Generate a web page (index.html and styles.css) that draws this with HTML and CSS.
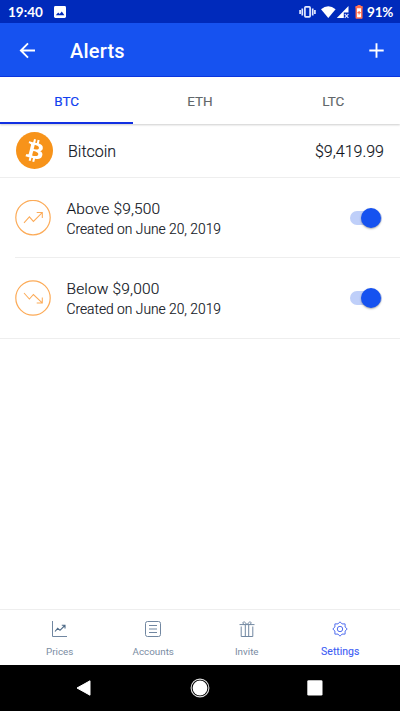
FILE: index.html
```html
<!DOCTYPE html>
<html lang="en">
<head>
<meta charset="utf-8">
<title>Alerts</title>
<link rel="stylesheet" href="styles.css">
</head>
<body>
<div class="phone">
  <div class="status">
    <span class="clock">19:40</span>
    <svg class="s-photo" width="12" height="12" viewBox="0 0 12 12"><rect width="12" height="12" rx="1.4" fill="#fff"/><path d="M1.8 9.3 4.2 6.4 5.7 8.1 7.8 5.4 10.4 9.3z" fill="#002abb"/></svg>
    <svg class="s-icons" width="66" height="16" viewBox="0 0 66 16">
      <g fill="none" stroke="#e4eaff" stroke-width="1.7"><rect x="5.9" y="2.900" width="5.200" height="10" rx=".8"/><path d="M3.300 4.500v7M13.700 4.500v7M1.100 6v4M15.900 6v4"/></g>
      <path d="M22 5.200Q29.300-.5 36.600 5.200L29.300 14z" fill="#fff"/>
      <path d="M49.500 2v6.600h-4.700V14H37.800z" fill="#fff"/>
      <path d="M45.800 10l3.600 3.800M49.400 10l-3.600 3.800" stroke="#dce3ff" stroke-width="1.100"/>
      <path d="M57.300 2.800h5.500V14h-5.500z" fill="#fff" stroke="#ff7051" stroke-width="1.500" stroke-linejoin="round"/>
      <path d="M58.500 1h3.100v1.300h1.900v1.900h-6.900V2.300h1.900z" fill="#ff7051"/>
      <path d="M58.400 8.700h3.400M60.100 7v3.400" stroke="#ff7051" stroke-width="1.200"/>
    </svg>
    <span class="percent">91%</span>
  </div>
  <header class="appbar">
    <svg class="back" width="18" height="18" viewBox="0 0 18 18" fill="none" stroke="#fff" stroke-width="1.900"><path d="M17 8.500H2.900M10 1.400 2.900 8.500l7.100 7.100"/></svg>
    <h1>Alerts</h1>
    <svg class="plus" width="16" height="16" viewBox="0 0 16 16" stroke="#fff" stroke-width="1.900"><path d="M8.500 .3v14.400M1.300 7.500h14.400"/></svg>
  </header>
  <nav class="tabs">
    <a class="tab active">BTC</a><a class="tab">ETH</a><a class="tab">LTC</a>
  </nav>
  <main>
    <section class="coin">
      <svg class="logo" width="37" height="37" viewBox="0 0 32 32"><circle cx="16" cy="16" r="16" fill="#f7931a"/><path fill="#fff" d="M23.189 14.020c.314-2.096-1.283-3.223-3.465-3.975l.708-2.840-1.728-.43-.69 2.765c-.454-.114-.92-.22-1.385-.326l.695-2.783L15.596 6l-.708 2.839c-.376-.086-.746-.170-1.104-.26l.002-.009-2.384-.595-.46 1.846s1.283.294 1.256.312c.700.175.826.638.805 1.006l-.806 3.235c.048.012.110.030.180.057l-.183-.045-1.130 4.532c-.086.212-.303.531-.793.410.018.025-1.256-.313-1.256-.313l-.858 1.978 2.250.561c.418.105.828.215 1.231.318l-.715 2.872 1.727.43.708-2.840c.472.127.930.245 1.378.357l-.706 2.828 1.728.43.715-2.866c2.948.558 5.164.333 6.097-2.333.752-2.146-.037-3.385-1.588-4.192 1.130-.260 1.980-1.003 2.207-2.538zm-3.950 5.538c-.533 2.147-4.148.986-5.320.695l.950-3.805c1.172.293 4.929.872 4.370 3.110zm.535-5.569c-.487 1.953-3.495.960-4.470.717l.860-3.450c.975.243 4.118.696 3.610 2.733z"/></svg>
      <span class="coin-name">Bitcoin</span>
      <span class="price">$9,419.99</span>
    </section>
    <section class="alert">
      <svg class="badge" width="36" height="36" viewBox="0 0 36 36" fill="none" stroke="#fcab58"><circle cx="18" cy="17.600" r="17.200" stroke-width="1.200"/><path d="M9 22.900 14.400 16.900 18.400 21.400 27.200 12.600M21.700 12.400h5.600v5.500" stroke-width="1.050"/></svg>
      <div class="info"><div class="name">Above $9,500</div><div class="date">Created on June 20, 2019</div></div>
      <span class="switch"></span>
    </section>
    <section class="alert last">
      <svg class="badge" width="36" height="36" viewBox="0 0 36 36" fill="none" stroke="#fcab58"><circle cx="18" cy="18" r="17.200" stroke-width="1.200"/><path d="M9 13 14.400 19 18.400 14.500 27.200 22.800M21.700 22.900h5.600v-5.500" stroke-width="1.050"/></svg>
      <div class="info"><div class="name">Below $9,000</div><div class="date">Created on June 20, 2019</div></div>
      <span class="switch"></span>
    </section>
  </main>
  <nav class="bottom">
    <a class="item"><svg width="18" height="18" viewBox="0 0 18 18" fill="none" stroke="#7187a1" stroke-width="1"><path d="M1.500 1v15.500H16"/><path d="M4 11.500 6.700 8.300 9 10.300 13.800 5.500M10.800 5.300h3.200v3.200" stroke="#4f6b88" stroke-width="1.100"/></svg><span>Prices</span></a>
    <a class="item"><svg width="18" height="18" viewBox="0 0 18 18" fill="none" stroke="#7187a1" stroke-width="1"><rect x="1.500" y="1.500" width="15" height="15" rx="2"/><path d="M5 5.500h8M5 9h8M5 12.500h8"/></svg><span>Accounts</span></a>
    <a class="item"><svg width="18" height="18" viewBox="0 0 18 18" fill="none" stroke="#7187a1" stroke-width="1"><path d="M1.500 4.600h15M3.200 6.500v10h11.600v-10M7.300 5v11.500M10.700 5v11.500M8.500 4.300C7 1.200 4.700 1.300 5 3.200c.1.700.7 1.100 1.300 1.200M9.500 4.300c1.500-3.100 3.800-3 3.500-1.100-.1.700-.7 1.100-1.300 1.200"/></svg><span>Invite</span></a>
    <a class="item current"><svg width="18" height="18" viewBox="0 0 18 18" fill="none" stroke="#536ff0" stroke-width="1" stroke-linejoin="round"><path d="M9 1.800 11 3.900 14.100 3.900 14.100 7 16.200 9 14.100 11 14.100 14.100 11 14.100 9 16.200 7 14.100 3.900 14.100 3.900 11 1.800 9 3.900 7 3.900 3.900 7 3.900z"/><circle cx="9" cy="9" r="2.700"/></svg><span>Settings</span></a>
  </nav>
  <div class="system">
    <svg width="18" height="18" viewBox="0 0 18 18"><path d="M1 9 14 1.800v14.400z" fill="#fff" stroke="#fff" stroke-linejoin="round"/></svg>
    <svg width="20" height="20" viewBox="0 0 20 20"><circle cx="10" cy="10" r="8.900" fill="none" stroke="#ddd" stroke-width="1.100"/><circle cx="10" cy="10" r="7.400" fill="#fff"/></svg>
    <svg width="18" height="18" viewBox="0 0 18 18"><rect x="1.300" y="1.300" width="15.200" height="15.200" rx="1.300" fill="#fff"/></svg>
  </div>
</div>
</body>
</html>
```
FILE: styles.css
```css
* { box-sizing: border-box; }
body { margin: 0; background: #fff; font-family: Roboto, "Liberation Sans", sans-serif; color: #10141c; }
svg { display: block; flex: none; }
.phone { width: 400px; height: 711px; display: flex; flex-direction: column; overflow: hidden; }

.status { height: 23px; flex: none; background: #002abb; color: #fff; display: flex; align-items: center; padding: 1px 7px 0 8px; font: 700 13.5px/22px Lato, sans-serif; }
.clock { width: 46px; white-space: nowrap; }
.s-icons { margin-left: auto; margin-right: 2px; }
.percent { width: 26px; letter-spacing: -.2px; white-space: nowrap; }

.appbar { height: 54px; flex: none; background: #1652f0; border-bottom: 1px solid #0b36e0; color: #fff; display: flex; align-items: center; padding: 2px 16px 0 18px; }
.appbar h1 { margin: 1px 0 0 34px; font-size: 20px; line-height: 24px; font-weight: 500; letter-spacing: .2px; }
.plus { margin-left: auto; }

.tabs { height: 47px; flex: none; display: flex; box-shadow: 0 1px 2px rgba(0, 0, 0, .2); }
.tab { flex: 1; text-align: center; font-size: 13.5px; line-height: 48px; font-weight: 400; color: #62676b; -webkit-text-stroke: .15px; }
.tab.active { color: #123ff0; border-bottom: 2px solid #1230e2; }

main { flex: 1; }
.coin { height: 54px; display: flex; align-items: center; padding: 0 16px 0 15.5px; border-bottom: 1px solid #eee; font-size: 16px; font-weight: 300; -webkit-text-stroke: .15px; }
.coin-name { margin: 2px 0 0 15.5px; }
.price { margin: 2px 0 0 auto; }
.alert { height: 80px; margin-left: 15px; padding-right: 18px; display: flex; align-items: center; border-bottom: 1px solid #eee; font-weight: 300; -webkit-text-stroke: .15px; }
.alert.last { height: 81px; margin-left: 0; padding-left: 15px; }
.info { margin: 3px 0 0 15.5px; }
.name { font-size: 15.5px; line-height: 20px; letter-spacing: .15px; }
.date { font-size: 13.8px; line-height: 20px; }
.last .info { margin-top: 2px; }
.switch { margin-left: auto; position: relative; width: 32px; height: 14px; border-radius: 7px; background: #bfcff9; }
.switch::after { content: ""; position: absolute; right: 1px; top: -3px; width: 20px; height: 20px; border-radius: 50%; background: #1652f0; box-shadow: 0 1px 2px rgba(0, 0, 0, .35); }

.bottom { height: 56px; flex: none; border-top: 1px solid #eee; display: flex; padding: 10px 13px 0; }
.item { flex: 1; display: flex; flex-direction: column; align-items: center; color: #7a8ca3; font-size: 9.8px; line-height: 14px; gap: 7px; }
.item.current { color: #3d5df5; font-size: 10.5px; -webkit-text-stroke: .1px; }

.system { height: 46px; flex: none; background: #000; display: flex; align-items: center; justify-content: space-between; padding: 0 76px; }
```
